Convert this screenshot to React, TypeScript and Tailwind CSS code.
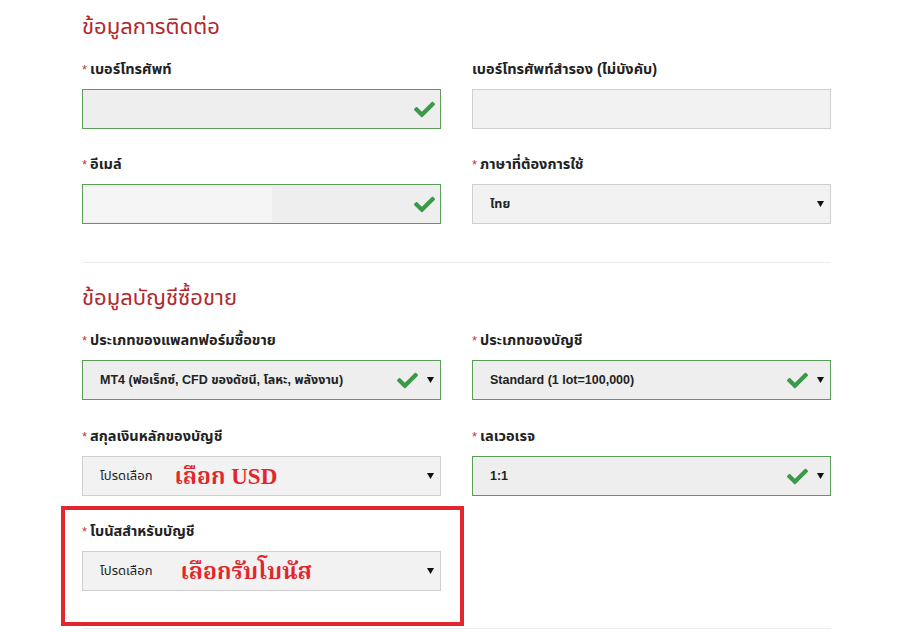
import React from 'react';

const Check = () => (
  <svg width="21" height="21" viewBox="0 0 512 512" className="shrink-0">
    <path
      fill="#3a9a47"
      d="M173.898 439.404l-166.4-166.4c-9.997-9.997-9.997-26.206 0-36.204l36.203-36.204c9.997-9.998 26.207-9.998 36.204 0L192 312.69 432.095 72.596c9.997-9.997 26.207-9.997 36.204 0l36.203 36.204c9.997 9.997 9.997 26.206 0 36.204l-294.4 294.401c-9.998 9.997-26.207 9.997-36.204-.001z"
    />
  </svg>
);

const Arrow = () => (
  <svg width="7" height="6" viewBox="0 0 7 6" className="shrink-0">
    <path d="M0 0 H7 L3.5 6 Z" fill="#111" />
  </svg>
);

type FieldProps = {
  label: string;
  required?: boolean;
  children: React.ReactNode;
};

const Field = ({ label, required = true, children }: FieldProps) => (
  <div>
    <div className="h-[20px] leading-[20px] text-[14.5px] font-bold text-[#222] mb-[10px] whitespace-nowrap">
      {required && <span className="text-[#c0392b] font-normal text-[13px] mr-[3px]">*</span>}
      {label}
    </div>
    {children}
  </div>
);

const Box = ({ ok, arrow, children }: { ok?: boolean; arrow?: boolean; children?: React.ReactNode }) => (
  <div
    className={`h-[40px] flex items-center pl-[17px] pr-[5px] border ${
      ok ? 'border-[#5a9e57] bg-[#eeeeee]' : 'border-[#cfcfcf] bg-[#f2f2f2]'
    }`}
  >
    <div className="flex-1 flex items-center text-[12.5px] font-bold text-[#222] min-w-0 whitespace-nowrap">{children}</div>
    {ok && <Check />}
    {arrow && <div className={ok ? 'ml-[9px] mr-[1px]' : 'mr-[1px]'}><Arrow /></div>}
  </div>
);

const Note = ({ text, className }: { text: string; className: string }) => (
  <span
    className={`text-[#e3262d] font-bold text-[23px] leading-none ${className}`}
    style={{ fontFamily: '"Liberation Serif", "Noto Serif Thai", "Noto Sans Thai", serif' }}
  >
    {text}
  </span>
);

export default function App() {
  return (
    <div className="min-h-[632px] bg-white" style={{ fontFamily: 'Tahoma, "Liberation Sans", "Noto Sans Thai", "Noto Sans", sans-serif' }}>
      <div className="ml-[82px] w-[749px]">
        <h2 className="mt-[13px] text-[22px] leading-[28px] text-[#b1282d]">ข้อมูลการติดต่อ</h2>
        <div className="grid grid-cols-2 gap-x-[31px] gap-y-[25px] mt-[18px]">
          <Field label="เบอร์โทรศัพท์">
            <Box ok />
          </Field>
          <Field label="เบอร์โทรศัพท์สำรอง (ไม่บังคับ)" required={false}>
            <Box />
          </Field>
          <Field label="อีเมล์">
            <Box ok>
              <div className="-ml-[16px] h-[35px] w-[188px] bg-[#f5f5f5]" />
            </Box>
          </Field>
          <Field label="ภาษาที่ต้องการใช้">
            <Box arrow>ไทย</Box>
          </Field>
        </div>

        <div className="mt-[38px] h-px bg-[#ececec]" />

        <h2 className="mt-[21px] text-[22px] leading-[28px] text-[#b1282d]">ข้อมูลบัญชีซื้อขาย</h2>
        <div className="grid grid-cols-2 gap-x-[31px] gap-y-[26px] mt-[18px]">
          <Field label="ประเภทของแพลทฟอร์มซื้อขาย">
            <Box ok arrow>MT4 (ฟอเร็กซ์, CFD ของดัชนี, โลหะ, พลังงาน)</Box>
          </Field>
          <Field label="ประเภทของบัญชี">
            <Box ok arrow>Standard (1 lot=100,000)</Box>
          </Field>
          <Field label="สกุลเงินหลักของบัญชี">
            <Box arrow>
              <span className="font-normal text-[13px]">โปรดเลือก</span>
              <Note text="เลือก USD" className="ml-[22px]" />
            </Box>
          </Field>
          <Field label="เลเวอเรจ">
            <Box ok arrow>1:1</Box>
          </Field>
          <div className="relative mt-[-1px]">
            <Field label="โบนัสสำหรับบัญชี">
              <Box arrow>
                <span className="font-normal text-[13px]">โปรดเลือก</span>
                <Note text="เลือกรับโบนัส" className="ml-[28px]" />
              </Box>
            </Field>
            <div className="absolute -top-[15px] -left-[21px] -right-[23px] -bottom-[35px] border-[4px] border-[#e3262d] pointer-events-none" />
          </div>
        </div>

        <div className="mt-[37px] h-px bg-[#ececec]" />
      </div>
    </div>
  );
}
